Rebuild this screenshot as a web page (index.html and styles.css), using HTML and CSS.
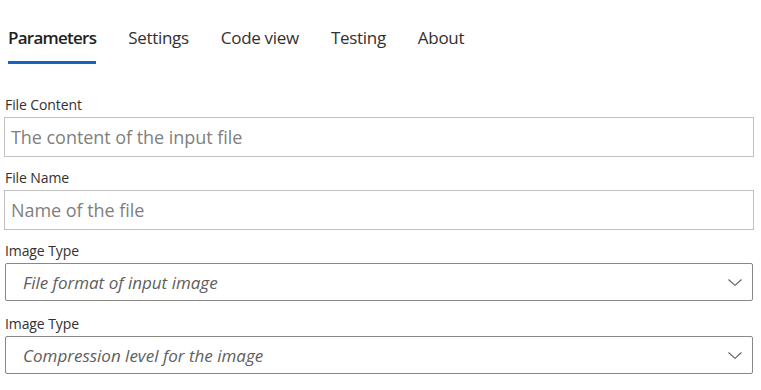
FILE: index.html
```html
<!DOCTYPE html>
<html>
<head>
<meta charset="utf-8">
<link rel="stylesheet" href="styles.css">
</head>
<body>
<div class="page">
  <nav class="tabs">
    <div class="tab active">Parameters</div>
    <div class="tab">Settings</div>
    <div class="tab">Code view</div>
    <div class="tab">Testing</div>
    <div class="tab">About</div>
  </nav>
  <div class="form">
    <div class="field">
      <label class="label">File Content</label>
      <div class="input"><span class="placeholder">The content of the input file</span></div>
    </div>
    <div class="field">
      <label class="label">File Name</label>
      <div class="input"><span class="placeholder">Name of the file</span></div>
    </div>
    <div class="field">
      <label class="label">Image Type</label>
      <div class="dropdown"><span class="dd-placeholder">File format of input image</span>
        <svg class="chev" width="14" height="7" viewBox="0 0 14 7"><polyline points="0.5,0.5 7,6.3 13.5,0.5" fill="none" stroke="#605e5c" stroke-width="1.1"/></svg>
      </div>
    </div>
    <div class="field">
      <label class="label">Image Type</label>
      <div class="dropdown"><span class="dd-placeholder">Compression level for the image</span>
        <svg class="chev" width="14" height="7" viewBox="0 0 14 7"><polyline points="0.5,0.5 7,6.3 13.5,0.5" fill="none" stroke="#605e5c" stroke-width="1.1"/></svg>
      </div>
    </div>
  </div>
</div>
</body>
</html>
```
FILE: styles.css
```css
html, body {
  margin: 0;
  padding: 0;
  background: #ffffff;
}
body {
  font-family: "Open Sans", "Noto Sans", "Liberation Sans", sans-serif;
  color: #323130;
}
.page {
  padding: 0 7px 0 4px;
}
.tabs {
  display: flex;
  gap: 32px;
  padding: 24px 0 0 4px;
  height: 40px;
}
.tab {
  font-size: 17px;
  line-height: 28px;
  color: #323130;
  height: 40px;
  box-sizing: border-box;
  letter-spacing: -0.3px;
}
.tab.active {
  font-weight: 600;
  color: #201f1e;
  border-bottom: 3px solid #1565c0;
  letter-spacing: -0.75px;
}
.form {
  padding-top: 32px;
  display: flex;
  flex-direction: column;
  gap: 12px;
}
.field {
  display: flex;
  flex-direction: column;
}
.label {
  font-size: 14px;
  line-height: 18px;
  color: #323130;
  padding-left: 1px;
  margin-bottom: 3px;
  letter-spacing: -0.1px;
}
.input {
  height: 40px;
  box-sizing: border-box;
  border: 1px solid #c1c1c1;
  display: flex;
  align-items: center;
  padding-left: 6px;
}
.placeholder {
  font-size: 18px;
  color: #7f7f7f;
  letter-spacing: -0.05px;
}
.dropdown {
  height: 38px;
  box-sizing: border-box;
  border: 1px solid #8a8886;
  border-radius: 2px;
  margin: 0 1px 2px;
  display: flex;
  align-items: center;
  justify-content: space-between;
  padding: 0 10px 0 17px;
}
.dd-placeholder {
  font-size: 17px;
  font-style: italic;
  color: #605e5c;
}
.chev {
  display: block;
}
```
